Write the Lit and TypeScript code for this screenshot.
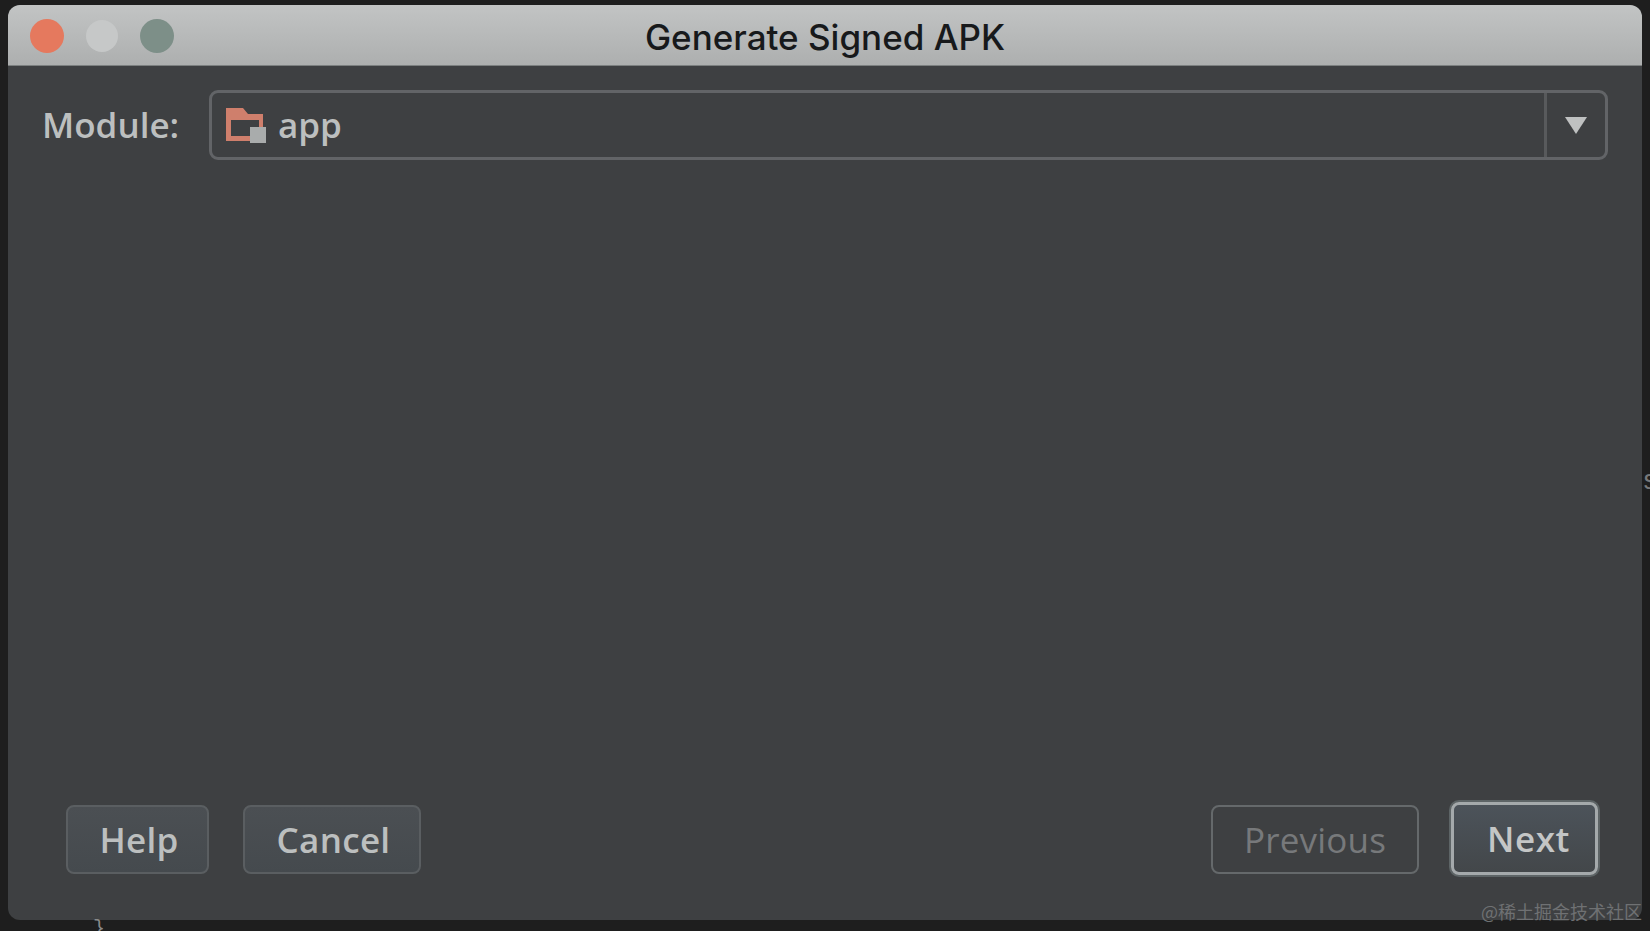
import { LitElement, html, css } from "lit";
import { customElement } from "lit/decorators.js";

@customElement("app-root")
export class AppRoot extends LitElement {
  static styles = css`
    :host {
      display: block;
      position: relative;
      width: 1650px;
      height: 931px;
      overflow: hidden;
      box-sizing: border-box;
      padding: 5px 8px 11px 8px;
      background: #1e1e1e;
      font-family: "Open Sans", "DejaVu Sans", sans-serif;
    }
    .window {
      height: 100%;
      display: flex;
      flex-direction: column;
      background: #3e4042;
      border-radius: 12px;
      overflow: hidden;
    }
    .titlebar {
      position: relative;
      height: 61px;
      flex: none;
      display: flex;
      align-items: center;
      justify-content: center;
      background: linear-gradient(#c2c4c4, #adafaf);
      border-bottom: 1px solid #7c8080;
      box-sizing: border-box;
    }
    .title {
      font-family: Inter, "Liberation Sans", sans-serif;
      font-size: 35px;
      font-weight: 500;
      color: #17191b;
      margin-top: 3px;
    }
    .lights {
      position: absolute;
      left: 22px;
      top: 14px;
      display: flex;
      gap: 20px;
    }
    .light {
      width: 34px;
      height: 34px;
      border-radius: 50%;
    }
    .red { background: #e5795e; }
    .grey { background: #c6c8c8; width: 32px; height: 32px; margin: 1px 1px 0 2px; }
    .green { background: #7d8f88; margin-left: 1px; }
    .content {
      flex: 1;
      display: flex;
      flex-direction: column;
      justify-content: space-between;
      padding: 24px 34px 43px 34px;
    }
    .module {
      display: flex;
      align-items: center;
      gap: 28px;
    }
    .label {
      font-size: 35px;
      font-weight: 600;
      color: #bcbfbf;
      width: 139px;
      white-space: nowrap;
      margin-top: -2px;
    }
    .select {
      flex: 1;
      height: 70px;
      box-sizing: border-box;
      display: flex;
      border: 3px solid #626467;
      border-radius: 9px;
    }
    .value {
      flex: 1;
      display: flex;
      align-items: center;
      gap: 11px;
      padding-left: 13px;
      border-right: 3px solid #585a5c;
      font-size: 35px;
      font-weight: 600;
      color: #bcbfbf;
    }
    .value span {
      margin-top: -2px;
    }
    .arrow {
      width: 58px;
      display: flex;
      align-items: center;
      justify-content: center;
    }
    .footer {
      display: flex;
      align-items: center;
      padding: 0 10px 0 24px;
    }
    .group {
      display: flex;
      align-items: center;
      gap: 34px;
    }
    .right {
      gap: 32px;
    }
    .spacer {
      flex: 1;
    }
    .btn {
      height: 69px;
      box-sizing: border-box;
      display: flex;
      align-items: center;
      justify-content: center;
      border: 2px solid #5a5e61;
      border-radius: 8px;
      background: linear-gradient(#4b4f53, #454a4e);
      color: #bcbfbf;
      font-size: 35px;
      font-weight: 600;
      letter-spacing: 0.3px;
    }
    .help { width: 143px; padding-left: 3px; }
    .cancel { width: 178px; padding-left: 3px; }
    .previous {
      width: 208px;
      background: none;
      color: #77797b;
      border-color: #65696b;
      font-weight: 500;
      letter-spacing: 0.2px;
    }
    .next {
      width: 147px;
      height: 73px;
      padding-left: 8px;
      margin-bottom: 2px;
      border: 3px solid #a4a9ab;
      box-shadow: 0 0 0 2px #5d6466;
      color: #c4c6c6;
      font-weight: 600;
      letter-spacing: 0.6px;
      background: linear-gradient(#4c535a, #43474a);
    }
    .watermark {
      position: absolute;
      right: 8px;
      top: 898px;
      font-family: "Noto Sans CJK SC", "Liberation Serif", serif;
      font-size: 18px;
      color: #6f7173;
      white-space: nowrap;
    }
    .edge {
      position: absolute;
      color: #8a8a8a;
      font-family: "Liberation Mono", monospace;
    }
    .brace { left: 93px; top: 917px; font-size: 20px; }
    .side { left: 1642px; top: 466px; font-size: 28px; color: #77797b; }
  `;

  protected render() {
    return html`
      <div class="window">
        <div class="titlebar">
          <div class="lights">
            <div class="light red"></div>
            <div class="light grey"></div>
            <div class="light green"></div>
          </div>
          <div class="title">Generate Signed APK</div>
        </div>
        <div class="content">
          <div class="module">
            <div class="label">Module:</div>
            <div class="select">
              <div class="value">
                <svg width="42" height="37" viewBox="0 0 42 37">
                  <path
                    d="M1 1h17l5 6h15v27H1z M6 13v16h28V13z"
                    fill="#cf7f6c"
                    fill-rule="evenodd"
                  />
                  <rect x="25" y="20" width="16" height="16" fill="#a9acac" />
                </svg>
                <span>app</span>
              </div>
              <div class="arrow">
                <svg width="22" height="17" viewBox="0 0 22 17">
                  <path d="M0 0h22L11 17z" fill="#bfc1c1" />
                </svg>
              </div>
            </div>
          </div>
          <div class="footer">
            <div class="group">
              <div class="btn help">Help</div>
              <div class="btn cancel">Cancel</div>
            </div>
            <div class="spacer"></div>
            <div class="group right">
              <div class="btn previous">Previous</div>
              <div class="btn next">Next</div>
            </div>
          </div>
        </div>
      </div>
      <div class="watermark">@稀土掘金技术社区</div>
      <div class="edge brace">}</div>
      <div class="edge side">s</div>
    `;
  }
}
